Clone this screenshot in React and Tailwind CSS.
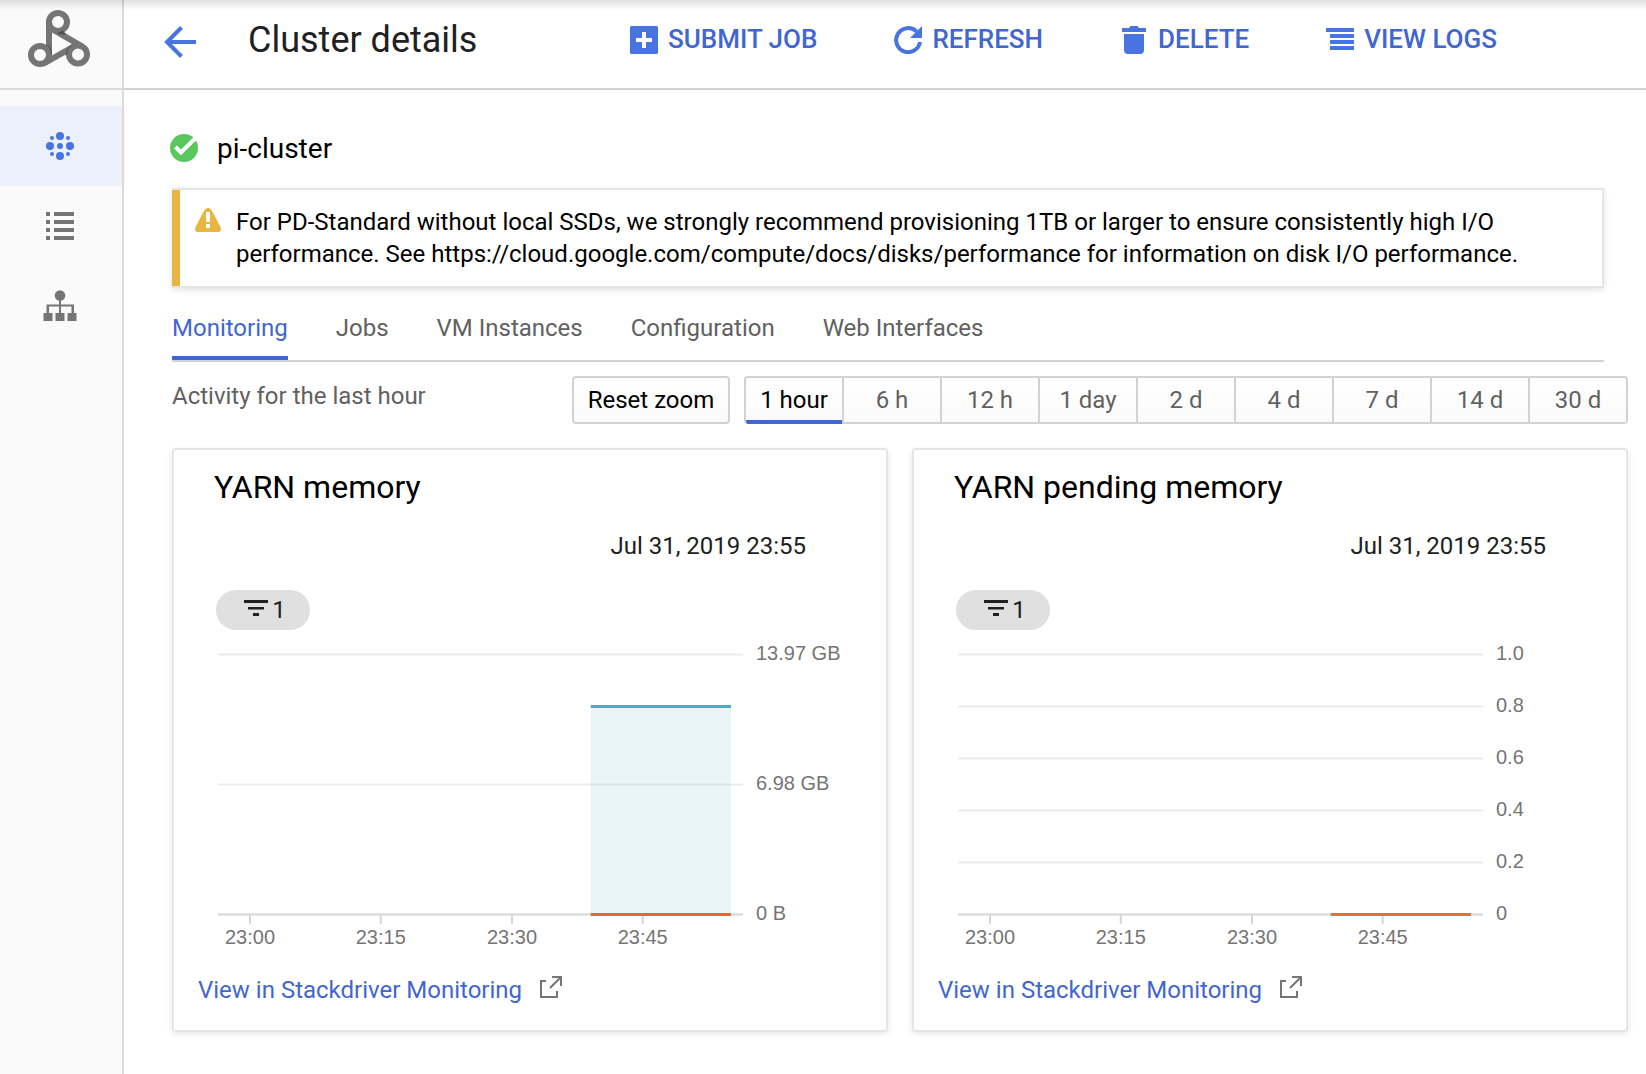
import React from 'react';

function DataprocLogo() {
  return (
    <svg width="64" height="60" viewBox="0 0 64 60" fill="none" stroke="#757575" strokeWidth="6" className="overflow-visible" aria-hidden="true">
      <path d="M14.4 55.1 43.6 38.7" />
      <path d="M19 14v33" />
      <path d="M23.6 21.8 52.4 38.7" />
      <circle cx="28" cy="14" r="9" />
      <circle cx="10" cy="47" r="9" />
      <circle cx="48" cy="46.5" r="9" />
      <path d="M27 25.500q5 1.500 9 .5l-3.500-3.500z" fill="#4f4f4f" stroke="none" />
      <path d="M17 36.500q5 4 4.500 10" stroke="#4f4f4f" strokeWidth="1" />
      <path d="M41 37.500q-5 4-5 10" stroke="#4f4f4f" strokeWidth="1" />
    </svg>
  );
}

function ClustersIcon() {
  return (
    <svg width="36" height="36" viewBox="0 0 36 36" fill="#4774e0" aria-hidden="true">
      <circle cx="18" cy="8" r="4" />
      <circle cx="8" cy="18" r="4" />
      <circle cx="28" cy="18" r="4" />
      <circle cx="18" cy="28" r="4" />
      <circle cx="18" cy="18" r="3" />
      <circle cx="10" cy="10" r="2" />
      <circle cx="26" cy="10" r="2" />
      <circle cx="10" cy="26" r="2" />
      <circle cx="26" cy="26" r="2" />
    </svg>
  );
}

function ListIcon() {
  return (
    <svg width="36" height="36" viewBox="0 0 36 36" fill="#757575" aria-hidden="true">
      <path d="M4 4h4v4H4zM12 4h20v4H12zM4 12h4v4H4zM12 12h20v4H12zM4 20h4v4H4zM12 20h20v4H12zM4 28h4v4H4zM12 28h20v4H12z" />
    </svg>
  );
}

function TreeIcon() {
  return (
    <svg width="36" height="36" viewBox="0 0 36 36" fill="#757575" aria-hidden="true">
      <circle cx="18" cy="7.500" r="5.300" />
      <path d="M17 12h2v14h-2zM4.500 16.500h27.500v9.500h-2.500v-7.500H7v7.500H4.500z" />
      <path d="M1.500 25h9v8h-9zM13.500 25h9v8h-9zM25.500 25h9v8h-9z" />
    </svg>
  );
}

function BackIcon() {
  return (
    <svg width="32" height="32" viewBox="0 0 32 32" fill="none" stroke="#4774e0" strokeWidth="4" aria-hidden="true">
      <path d="M3 16h29M17.500 1.500 3 16l14.500 14.500" />
    </svg>
  );
}

function SubmitIcon() {
  return (
    <svg width="28" height="28" viewBox="0 0 28 28" aria-hidden="true">
      <rect width="28" height="28" rx="1.500" fill="#4774e0" />
      <path d="M12 6h4v6h6v4h-6v6h-4v-6H6v-4h6z" fill="#fff" />
    </svg>
  );
}

function RefreshIcon() {
  return (
    <svg width="28" height="28" viewBox="0 0 28 28" aria-hidden="true">
      <path d="M26 16A12 12 0 1 1 22.600 5.600" fill="none" stroke="#4774e0" strokeWidth="4" />
      <path d="M28 0v12H16z" fill="#4774e0" />
    </svg>
  );
}

function TrashIcon() {
  return (
    <svg width="28" height="28" viewBox="0 0 28 28" fill="#4774e0" aria-hidden="true">
      <path d="M2 2h7l1.500-2h7L19 2h7v4H2zM4 8h20v16q0 4-4 4H8q-4 0-4-4z" />
    </svg>
  );
}

function LogsIcon() {
  return (
    <svg width="28" height="28" viewBox="0 0 28 28" fill="#4774e0" aria-hidden="true">
      <path d="M0 2h28v4H0zM4 8h24v4H4zM4 14h24v4H4zM4 20h24v4H4z" />
    </svg>
  );
}

function CheckIcon() {
  return (
    <svg width="28" height="28" viewBox="0 0 28 28" aria-label="Running" role="img">
      <circle cx="14" cy="14" r="14" fill="#5bc75f" />
      <path d="m5.500 13 5.500 5.500L25.500 4" fill="none" stroke="#fff" strokeWidth="4" />
    </svg>
  );
}

function WarningIcon() {
  return (
    <svg width="26" height="24" viewBox="0 0 26 24" aria-label="Warning" role="img">
      <path d="M9.500 2Q13-2 16.500 2L25.500 19q1.500 5-3 5h-19q-4.500 0-3-5z" fill="#e8b53e" />
      <path d="M11 4h4v10h-4zM11 16h4v4h-4z" fill="#fff" />
    </svg>
  );
}

function FilterIcon() {
  return (
    <svg width="24" height="16" viewBox="0 0 24 16" fill="#212121" aria-hidden="true">
      <path d="M0 0h24v3H0zM4 7h16v2.500H4zM9 13h6v3H9z" />
    </svg>
  );
}

function ExternalIcon() {
  return (
    <svg width="22" height="22" viewBox="0 0 22 22" fill="none" stroke="#757575" strokeWidth="2" aria-hidden="true">
      <path d="M6 5H1v16h16v-6M12 1h9v9M21 1 10 12" />
    </svg>
  );
}

const navItems = [
  { label: 'Clusters', Icon: ClustersIcon, active: true },
  { label: 'Jobs', Icon: ListIcon },
  { label: 'Workflows', Icon: TreeIcon },
];

const actions = [
  { label: 'SUBMIT JOB', Icon: SubmitIcon },
  { label: 'REFRESH', Icon: RefreshIcon },
  { label: 'DELETE', Icon: TrashIcon },
  { label: 'VIEW LOGS', Icon: LogsIcon },
];

const tabs = ['Monitoring', 'Jobs', 'VM Instances', 'Configuration', 'Web Interfaces'];
const ranges = ['1 hour', '6 h', '12 h', '1 day', '2 d', '4 d', '7 d', '14 d', '30 d'];

const times = [
  { x: '6.1%', label: '23:00' },
  { x: '31%', label: '23:15' },
  { x: '56%', label: '23:30' },
  { x: '80.9%', label: '23:45' },
];

const PLOT_HEIGHT = 260;
const PLOT_TOP = 8.5;
const PLOT_BOTTOM = PLOT_TOP + PLOT_HEIGHT;
const SERIES_Y = PLOT_TOP + 52;

function Chart({ title, levels, area, baseColor }) {
  const step = PLOT_HEIGHT / (levels.length - 1);
  return (
    <div className="mt-[16px] pr-[143px] pl-[44px]">
      <svg
        width="100%"
        height="300"
        className="block overflow-visible font-['Liberation_Sans',Arial,sans-serif] text-[20px]"
        role="img"
        aria-label={title}
      >
        {levels.map((label, i) => {
          const y = PLOT_TOP + step * i;
          const last = i === levels.length - 1;
          return (
            <g key={label}>
              <line x1="0" x2="100%" y1={y} y2={y} stroke={last ? '#d6d6d6' : '#ebebeb'} strokeWidth="2" />
              <text x="100%" dx="13" y={8 + step * i + 6} fill="#757575">{label}</text>
            </g>
          );
        })}
        {times.map((t) => (
          <g key={t.label}>
            <line x1={t.x} x2={t.x} y1="269" y2="278" stroke="#d6d6d6" strokeWidth="2" />
            <text x={t.x} y="298" textAnchor="middle" fill="#757575">{t.label}</text>
          </g>
        ))}
        {area && (
          <>
            <rect x="71%" y={SERIES_Y} width="26.700%" height={PLOT_BOTTOM - SERIES_Y} fill="#4dabbf" fillOpacity="0.120" />
            <line x1="71%" x2="97.700%" y1={SERIES_Y} y2={SERIES_Y} stroke="#4dabbf" strokeWidth="3" />
          </>
        )}
        <line x1="71%" x2="97.700%" y1={PLOT_BOTTOM} y2={PLOT_BOTTOM} stroke={baseColor} strokeWidth="3" />
      </svg>
    </div>
  );
}

function ChartCard({ title, levels, area, baseColor }) {
  return (
    <section className="min-w-0 flex-1 rounded-[4px] border-2 border-[#e6e6e6] bg-white pb-[24px] shadow-[0_2px_6px_rgba(0,0,0,0.1)]">
      <h2 className="mt-[17px] pl-[40px] text-[32px] leading-[40px] text-black">{title}</h2>
      <p className="mt-[23px] pr-[80px] text-right text-[24px] leading-[32px] text-[#212121]">Jul 31, 2019 23:55</p>
      <button
        type="button"
        aria-label="1 filter"
        className="mt-[28px] ml-[42px] flex h-[40px] w-[94px] items-center justify-center gap-1 rounded-full bg-[#e0e0e0] pl-[4px] text-[24px] leading-[32px] text-[#212121]"
      >
        <span className="pb-1">
          <FilterIcon />
        </span>
        <span>1</span>
      </button>
      <Chart title={title} levels={levels} area={area} baseColor={baseColor} />
      <a href="#stackdriver" className="mt-[28px] ml-[24px] flex w-fit items-center gap-[18px] text-[24px] leading-[32px] text-[#3f66d1]">
        View in Stackdriver Monitoring
        <span className="pb-[6px]">
          <ExternalIcon />
        </span>
      </a>
    </section>
  );
}

export default function App() {
  return (
    <div className="relative flex min-h-screen bg-white font-[Roboto,Arial,sans-serif]">
      <div className="pointer-events-none absolute inset-x-0 top-0 h-[10px] bg-linear-to-b from-black/12 to-transparent" />

      <aside className="w-[124px] shrink-0 border-r-2 border-[#dadada] bg-[#fafafa]">
        <div className="h-[90px] border-b-2 border-[#dadada] pt-[8px] pl-[30px]">
          <DataprocLogo />
        </div>
        <nav className="pt-[16px]">
          {navItems.map(({ label, Icon, active }) => (
            <a
              key={label}
              href={`#${label.toLowerCase()}`}
              aria-label={label}
              className={`flex h-[80px] items-center pl-[42px] ${active ? 'bg-[#ebf0fa]' : ''}`}
            >
              <Icon />
            </a>
          ))}
        </nav>
      </aside>

      <div className="min-w-0 flex-1">
        <header className="flex h-[90px] items-center border-b-2 border-[#d2d2d2] pb-[8px] pl-[40px]">
          <button type="button" aria-label="Back" className="mt-[4px]">
            <BackIcon />
          </button>
          <h1 className="ml-[52px] w-[382px] text-[36px] leading-[40px] text-[#212121]">Cluster details</h1>
          <div className="flex items-center gap-[77px]">
            {actions.map(({ label, Icon }) => (
              <button
                key={label}
                type="button"
                className="flex items-center gap-[10px] text-[26px] leading-[32px] font-medium whitespace-nowrap text-[#3f66d1]"
              >
                <Icon />
                <span className="pb-[2px]">{label}</span>
              </button>
            ))}
          </div>
        </header>

        <main className="pt-[42px] pr-[18px] pb-[42px] pl-[48px]">
          <div className="-ml-[2px] flex h-[32px] items-center gap-[19px]">
            <CheckIcon />
            <span className="pt-[2px] text-[28px] leading-[32px] text-black">pi-cluster</span>
          </div>

          <div role="alert" className="mt-[24px] mr-[24px] flex border-y-2 border-r-2 border-[#e6e6e6] bg-white shadow-[0_2px_6px_rgba(0,0,0,0.12)]">
            <div className="w-[8px] shrink-0 bg-[#e8b53e]" />
            <div className="flex gap-[15px] pt-[16px] pr-[60px] pb-[16px] pl-[15px]">
              <div className="shrink-0 pt-[2px]">
                <WarningIcon />
              </div>
              <p className="text-[24px] leading-[32px] text-black">
                For PD-Standard without local SSDs, we strongly recommend provisioning 1TB or larger to ensure consistently high I/O performance. See https://cloud.google.com/compute/docs/disks/performance for information on disk I/O performance.
              </p>
            </div>
          </div>

          <div role="tablist" className="mt-[24px] mr-[24px] flex gap-[48px] border-b-2 border-[#d2d2d2]">
            {tabs.map((tab, i) => (
              <button
                key={tab}
                type="button"
                role="tab"
                aria-selected={i === 0}
                className={`h-[48px] border-b-4 pb-[12px] text-[24px] leading-[32px] ${
                  i === 0 ? 'border-[#3f66d1] text-[#3f66d1]' : 'border-transparent text-[#616161]'
                }`}
              >
                {tab}
              </button>
            ))}
          </div>

          <div className="mt-[14px] flex items-start">
            <p className="pt-[4px] text-[24px] leading-[32px] text-[#616161]">Activity for the last hour</p>
            <button
              type="button"
              className="ml-auto h-[48px] w-[158px] rounded-[4px] border-2 border-[#d2d2d2] bg-linear-to-b from-white to-[#fafafa] text-[24px] leading-[32px] text-black"
            >
              Reset zoom
            </button>
            <div className="ml-[14px] flex h-[48px] w-[884px] overflow-hidden rounded-[4px] border-x-2 border-t-2 border-[#d2d2d2] bg-linear-to-b from-white to-[#fafafa]">
              {ranges.map((range, i) => (
                <button
                  key={range}
                  type="button"
                  aria-pressed={i === 0}
                  className={`flex-1 pb-[2px] text-[24px] leading-[32px] ${
                    i === 0
                      ? 'text-black shadow-[inset_0_-4px_0_#3f66d1]'
                      : 'border-l-2 border-[#d2d2d2] text-[#616161] shadow-[inset_0_-2px_0_#d2d2d2]'
                  }`}
                >
                  {range}
                </button>
              ))}
            </div>
          </div>

          <div className="mt-[24px] flex gap-[24px]">
            <ChartCard title="YARN memory" levels={['13.97 GB', '6.98 GB', '0 B']} area baseColor="#ec6337" />
            <ChartCard title="YARN pending memory" levels={['1.0', '0.8', '0.6', '0.4', '0.2', '0']} baseColor="#dc7238" />
          </div>
        </main>
      </div>
    </div>
  );
}
